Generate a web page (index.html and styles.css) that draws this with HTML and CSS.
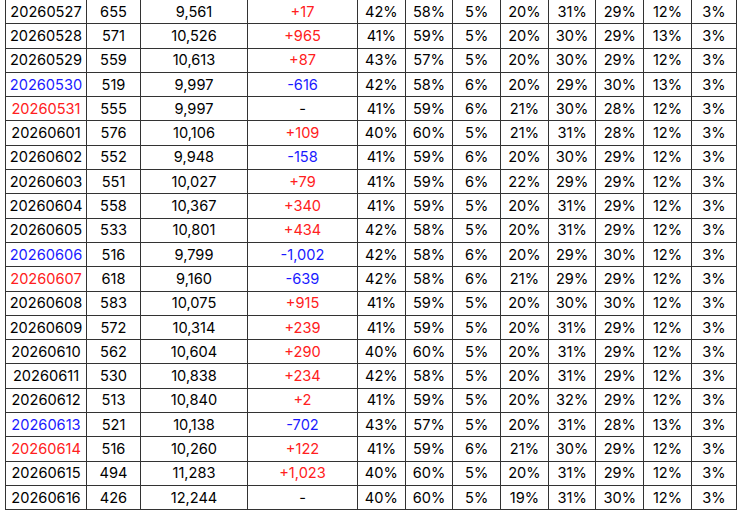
FILE: index.html
```html
<!DOCTYPE html>
<html>
<head>
<meta charset="utf-8">
<link rel="stylesheet" href="styles.css">
</head>
<body>
<table class="grid">
<colgroup>
<col class="c-date"><col class="c-n"><col class="c-total"><col class="c-diff">
<col class="c-p"><col class="c-p"><col class="c-p"><col class="c-p"><col class="c-p"><col class="c-p"><col class="c-p"><col class="c-last">
</colgroup>
<tbody>
<tr><td>20260527</td><td>655</td><td>9,561</td><td class="up">+17</td><td>42%</td><td>58%</td><td>5%</td><td>20%</td><td>31%</td><td>29%</td><td>12%</td><td>3%</td></tr>
<tr><td>20260528</td><td>571</td><td>10,526</td><td class="up">+965</td><td>41%</td><td>59%</td><td>5%</td><td>20%</td><td>30%</td><td>29%</td><td>13%</td><td>3%</td></tr>
<tr><td>20260529</td><td>559</td><td>10,613</td><td class="up">+87</td><td>43%</td><td>57%</td><td>5%</td><td>20%</td><td>30%</td><td>29%</td><td>12%</td><td>3%</td></tr>
<tr><td class="down">20260530</td><td>519</td><td>9,997</td><td class="down">-616</td><td>42%</td><td>58%</td><td>6%</td><td>20%</td><td>29%</td><td>30%</td><td>13%</td><td>3%</td></tr>
<tr><td class="up">20260531</td><td>555</td><td>9,997</td><td>-</td><td>41%</td><td>59%</td><td>6%</td><td>21%</td><td>30%</td><td>28%</td><td>12%</td><td>3%</td></tr>
<tr><td>20260601</td><td>576</td><td>10,106</td><td class="up">+109</td><td>40%</td><td>60%</td><td>5%</td><td>21%</td><td>31%</td><td>28%</td><td>12%</td><td>3%</td></tr>
<tr><td>20260602</td><td>552</td><td>9,948</td><td class="down">-158</td><td>41%</td><td>59%</td><td>6%</td><td>20%</td><td>30%</td><td>29%</td><td>12%</td><td>3%</td></tr>
<tr><td>20260603</td><td>551</td><td>10,027</td><td class="up">+79</td><td>41%</td><td>59%</td><td>6%</td><td>22%</td><td>29%</td><td>29%</td><td>12%</td><td>3%</td></tr>
<tr><td>20260604</td><td>558</td><td>10,367</td><td class="up">+340</td><td>41%</td><td>59%</td><td>5%</td><td>20%</td><td>31%</td><td>29%</td><td>12%</td><td>3%</td></tr>
<tr><td>20260605</td><td>533</td><td>10,801</td><td class="up">+434</td><td>42%</td><td>58%</td><td>5%</td><td>20%</td><td>31%</td><td>29%</td><td>12%</td><td>3%</td></tr>
<tr><td class="down">20260606</td><td>516</td><td>9,799</td><td class="down">-1,002</td><td>42%</td><td>58%</td><td>6%</td><td>20%</td><td>29%</td><td>30%</td><td>12%</td><td>3%</td></tr>
<tr><td class="up">20260607</td><td>618</td><td>9,160</td><td class="down">-639</td><td>42%</td><td>58%</td><td>6%</td><td>21%</td><td>29%</td><td>29%</td><td>12%</td><td>3%</td></tr>
<tr><td>20260608</td><td>583</td><td>10,075</td><td class="up">+915</td><td>41%</td><td>59%</td><td>5%</td><td>20%</td><td>30%</td><td>30%</td><td>12%</td><td>3%</td></tr>
<tr><td>20260609</td><td>572</td><td>10,314</td><td class="up">+239</td><td>41%</td><td>59%</td><td>5%</td><td>20%</td><td>31%</td><td>29%</td><td>12%</td><td>3%</td></tr>
<tr><td>20260610</td><td>562</td><td>10,604</td><td class="up">+290</td><td>40%</td><td>60%</td><td>5%</td><td>20%</td><td>31%</td><td>29%</td><td>12%</td><td>3%</td></tr>
<tr><td>20260611</td><td>530</td><td>10,838</td><td class="up">+234</td><td>42%</td><td>58%</td><td>5%</td><td>20%</td><td>31%</td><td>29%</td><td>12%</td><td>3%</td></tr>
<tr><td>20260612</td><td>513</td><td>10,840</td><td class="up">+2</td><td>41%</td><td>59%</td><td>5%</td><td>20%</td><td>32%</td><td>29%</td><td>12%</td><td>3%</td></tr>
<tr><td class="down">20260613</td><td>521</td><td>10,138</td><td class="down">-702</td><td>43%</td><td>57%</td><td>5%</td><td>20%</td><td>31%</td><td>28%</td><td>13%</td><td>3%</td></tr>
<tr><td class="up">20260614</td><td>516</td><td>10,260</td><td class="up">+122</td><td>41%</td><td>59%</td><td>6%</td><td>21%</td><td>30%</td><td>29%</td><td>12%</td><td>3%</td></tr>
<tr><td>20260615</td><td>494</td><td>11,283</td><td class="up">+1,023</td><td>40%</td><td>60%</td><td>5%</td><td>20%</td><td>31%</td><td>29%</td><td>12%</td><td>3%</td></tr>
<tr><td>20260616</td><td>426</td><td>12,244</td><td>-</td><td>40%</td><td>60%</td><td>5%</td><td>19%</td><td>31%</td><td>30%</td><td>12%</td><td>3%</td></tr>
</tbody>
</table>
</body>
</html>
```
FILE: styles.css
```css
html, body {
  margin: 0;
  padding: 0;
  background: #fff;
}
body {
  padding: 0 5px;
  font-family: Inter, "Noto Sans", sans-serif;
  font-size: 14.6px;
  color: #000;
}
.grid {
  width: 730px;
  table-layout: fixed;
  border-collapse: collapse;
  margin-top: -1px;
}
.grid tr {
  height: 24.3px;
}
.grid td {
  border: 1px solid #333;
  padding: 0;
  text-align: center;
  vertical-align: middle;
  white-space: nowrap;
}
.c-date { width: 81px; }
.c-n { width: 54px; }
.c-total { width: 107px; }
.c-diff { width: 110px; }
.c-p { width: 47.7px; }
.c-last { width: 45px; }
.up { color: #ff2020; }
.down { color: #1a1aff; }
```
